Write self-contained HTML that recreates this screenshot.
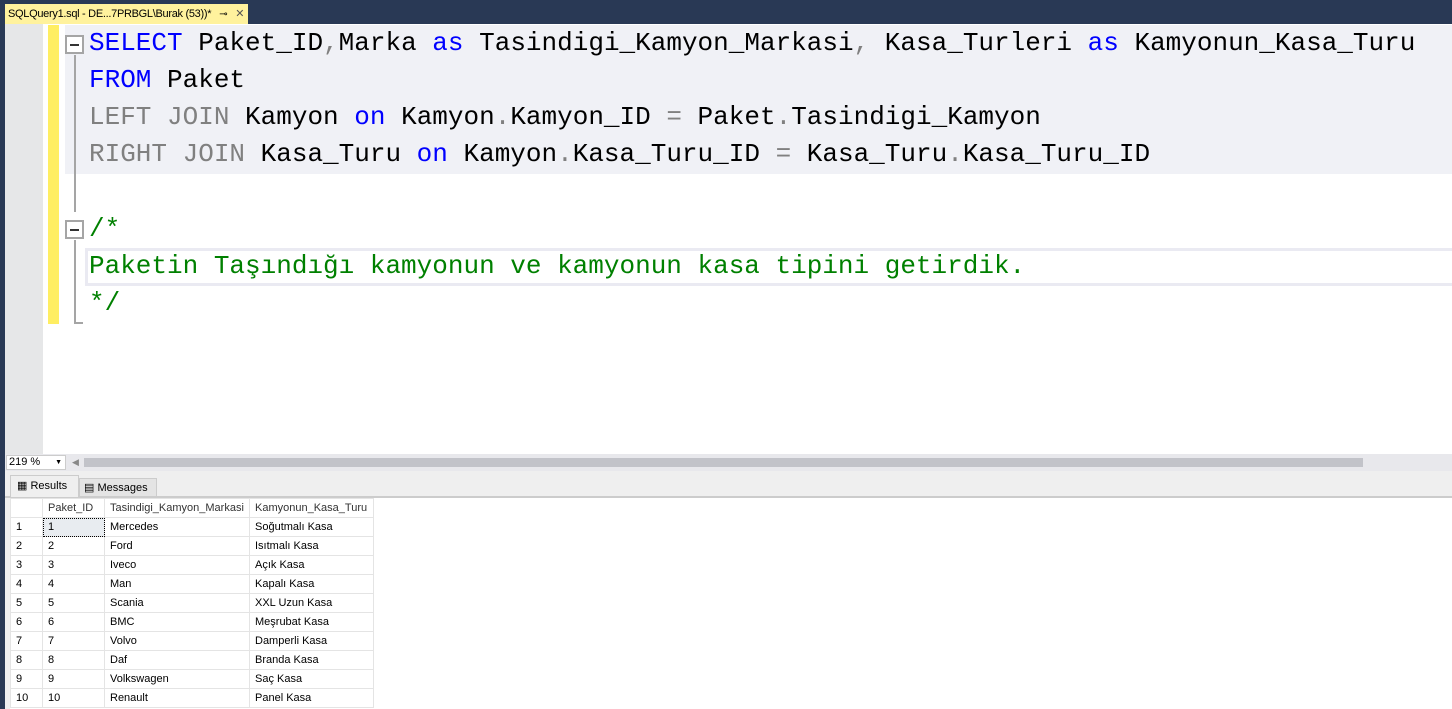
<!DOCTYPE html><html><head><meta charset="utf-8"><style>
*{margin:0;padding:0;box-sizing:border-box}
body{width:1452px;height:709px;overflow:hidden;background:#293955;position:relative;font-family:"Liberation Sans",sans-serif}
.a{position:absolute}
.code{font-family:"Liberation Mono",monospace;font-size:26px;white-space:pre;line-height:37px;position:absolute;left:89px}
.k{color:#0000ff}.g{color:#808080}.c{color:#008000}
table{border-collapse:collapse;font-size:11px;position:absolute;left:10px;top:498px;background:#fff}
td{height:19px;border:1px solid #e4e4e4;padding:0 0 0 5px;color:#000;white-space:nowrap}
tr:first-child td{background:#fff;color:#333}
</style></head><body>
<div class="a" style="left:5px;top:4px;width:243px;height:21px;background:#fff29d;font-size:11px;letter-spacing:-0.3px;line-height:21px;padding-left:3px;color:#000;white-space:nowrap;overflow:hidden">SQLQuery1.sql - DE...7PRBGL\Burak (53))*<span style="margin-left:8px;font-size:10px">⊸</span><span style="margin-left:8px;color:#555">✕</span></div>
<div class="a" style="left:5px;top:24px;width:1447px;height:430px;background:#fff"></div>
<div class="a" style="left:5px;top:24px;width:38px;height:430px;background:#e6e7e8"></div>
<div class="a" style="left:48px;top:25px;width:11px;height:299px;background:#ffee62"></div>
<div class="a" style="left:65px;top:25px;width:1387px;height:149px;background:#f0f1f6"></div>
<div class="a" style="left:74px;top:55px;width:2px;height:120px;background:#a5a5a5"></div>
<div class="a" style="left:74px;top:174px;width:2px;height:38px;background:#a5a5a5"></div>
<div class="a" style="left:74px;top:240px;width:2px;height:84px;background:#a5a5a5"></div>
<div class="a" style="left:74px;top:322px;width:9px;height:2px;background:#a5a5a5"></div>
<div class="a" style="left:65px;top:35px;width:19px;height:19px;border:2px solid #a5a5a5;background:#fff"><div class="a" style="left:3px;top:7px;width:9px;height:2px;background:#333"></div></div>
<div class="a" style="left:65px;top:220px;width:19px;height:19px;border:2px solid #a5a5a5;background:#fff"><div class="a" style="left:3px;top:7px;width:9px;height:2px;background:#333"></div></div>
<div class="a" style="left:85px;top:248px;width:1367px;height:38px;border:3px solid #eaeaf2;border-right:none"></div>
<div class="code" style="top:25px"><span class="k">SELECT</span> Paket_ID<span class="g">,</span>Marka <span class="k">as</span> Tasindigi_Kamyon_Markasi<span class="g">,</span> Kasa_Turleri <span class="k">as</span> Kamyonun_Kasa_Turu
<span class="k">FROM</span> Paket
<span class="g">LEFT JOIN</span> Kamyon <span class="k">on</span> Kamyon<span class="g">.</span>Kamyon_ID <span class="g">=</span> Paket<span class="g">.</span>Tasindigi_Kamyon
<span class="g">RIGHT JOIN</span> Kasa_Turu <span class="k">on</span> Kamyon<span class="g">.</span>Kasa_Turu_ID <span class="g">=</span> Kasa_Turu<span class="g">.</span>Kasa_Turu_ID
</div>
<div class="code c" style="top:211px">/*
Paketin Taşındığı kamyonun ve kamyonun kasa tipini getirdik.
*/</div>
<div class="a" style="left:5px;top:454px;width:1447px;height:17px;background:#e8e8ec"></div>
<div class="a" style="left:6px;top:455px;width:60px;height:15px;background:#fff;border:1px solid #ccc;font-size:11px;line-height:13px;padding-left:2px">219 %<span style="position:absolute;right:3px;font-size:7px">▼</span></div>
<div class="a" style="left:72px;top:457px;font-size:9px;color:#888">◀</div>
<div class="a" style="left:84px;top:458px;width:1279px;height:9px;background:#c2c3c9"></div>
<div class="a" style="left:5px;top:471px;width:1447px;height:238px;background:#efefef"></div>
<div class="a" style="left:5px;top:496px;width:1447px;height:2px;background:#ccc"></div>
<div class="a" style="left:10px;top:475px;width:69px;height:22px;background:#efefef;border:1px solid #ccc;border-bottom:none;font-size:11px;line-height:20px;padding-left:6px">▦ Results</div>
<div class="a" style="left:79px;top:478px;width:78px;height:19px;background:#e4e4e4;border:1px solid #ccc;font-size:11px;line-height:18px;padding-left:4px">▤ Messages</div>
<div class="a" style="left:10px;top:498px;width:1442px;height:211px;background:#fff"></div>
<table>
<tr><td style="width:32px"></td><td style="width:62px">Paket_ID</td><td style="width:145px">Tasindigi_Kamyon_Markasi</td><td style="width:124px">Kamyonun_Kasa_Turu</td></tr>
<tr><td>1</td><td style="background:#e8ecf0;outline:1px dotted #000;outline-offset:-1px">1</td><td>Mercedes</td><td>Soğutmalı Kasa</td></tr>
<tr><td>2</td><td>2</td><td>Ford</td><td>Isıtmalı Kasa</td></tr>
<tr><td>3</td><td>3</td><td>Iveco</td><td>Açık Kasa</td></tr>
<tr><td>4</td><td>4</td><td>Man</td><td>Kapalı Kasa</td></tr>
<tr><td>5</td><td>5</td><td>Scania</td><td>XXL Uzun Kasa</td></tr>
<tr><td>6</td><td>6</td><td>BMC</td><td>Meşrubat Kasa</td></tr>
<tr><td>7</td><td>7</td><td>Volvo</td><td>Damperli Kasa</td></tr>
<tr><td>8</td><td>8</td><td>Daf</td><td>Branda Kasa</td></tr>
<tr><td>9</td><td>9</td><td>Volkswagen</td><td>Saç Kasa</td></tr>
<tr><td>10</td><td>10</td><td>Renault</td><td>Panel Kasa</td></tr>
</table>
</body></html>
